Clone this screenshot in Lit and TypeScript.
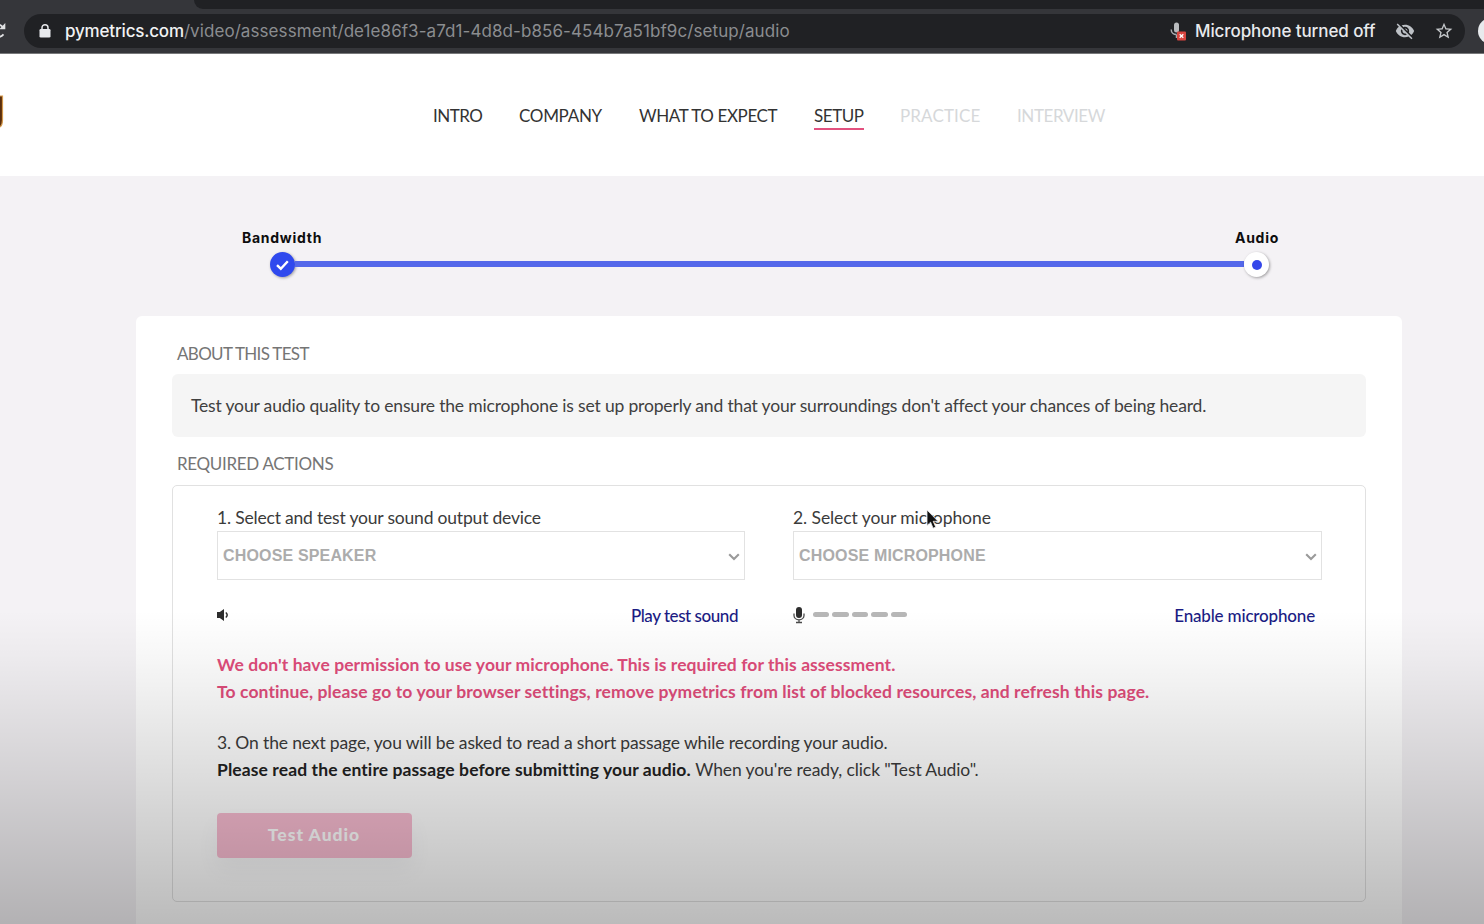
import { LitElement, html, css } from "lit";
import { customElement, property } from "lit/decorators.js";

@customElement("browser-bar")
class BrowserBar extends LitElement {
  static styles = css`
    :host { display: block; height: 54px; background: #35363a; font-family: Inter, sans-serif; overflow: hidden; box-sizing: border-box; border-bottom: 1px solid #77787a; }
    .tabs { height: 9px; margin-left: 194px; background: #202124; border-bottom-left-radius: 9px; }
    .row { display: flex; align-items: center; height: 34px; margin-top: 5px; }
    .reload { width: 24px; height: 34px; flex: none; }
    .pill { width: 1441px; height: 34px; flex: none; border-radius: 17px; background: #202124; display: flex; align-items: center; box-sizing: border-box; padding-left: 15px; }
    .lock { width: 12px; height: 16px; margin-right: 14px; flex: none; }
    .url { font-size: 17px; letter-spacing: 0.08px; color: #8b8d90; white-space: nowrap; width: 1104px; flex: none; }
    .url b { font-weight: 500; color: #f1f2f3; letter-spacing: -0.18px; }
    .mic { width: 18px; height: 20px; flex: none; }
    .off { width: 180px; flex: none; margin-left: 8px; font-size: 17px; font-weight: 500; letter-spacing: -0.1px; color: #e8eaed; white-space: nowrap; }
    .eye { width: 20px; height: 20px; margin-left: 20px; flex: none; }
    .star { width: 20px; height: 20px; margin-left: 19px; flex: none; }
    .avatar { width: 26px; height: 26px; flex: none; margin-left: 13px; border-radius: 50%; background: #e8eaed; }
  `;
  render() {
    return html`
      <div class="tabs"></div>
      <div class="row">
        <svg class="reload" viewBox="0 0 24 34">
          <path d="M-8 17a6.5 6.5 0 0 0 11.5 3.4M-2 10.5c2 0 3.400 1 5 2.800" fill="none" stroke="#e0e1e3" stroke-width="1.800"/>
          <path d="M5.300 9v6.300h-6z" fill="#e0e1e3"/>
        </svg>
        <div class="pill">
          <svg class="lock" viewBox="0 0 12 16">
            <rect x="0.500" y="6" width="11" height="8.500" rx="1.300" fill="#e8eaed"/>
            <path d="M3 6.500V4.700a3 3 0 0 1 6 0V6.500" fill="none" stroke="#e8eaed" stroke-width="1.500"/>
          </svg>
          <span class="url"><b>pymetrics.com</b>/video/assessment/de1e86f3-a7d1-4d8d-b856-454b7a51bf9c/setup/audio</span>
          <svg class="mic" viewBox="0 0 18 20">
            <rect x="5" y="1.500" width="5" height="10" rx="2.500" fill="#b9bbbe"/>
            <path d="M2.200 8.500c0 3 2.300 5.100 5.300 5.100M7.500 13.500V17" fill="none" stroke="#a9abae" stroke-width="1.500"/>
            <rect x="8" y="10.500" width="9" height="9" rx="1" fill="#d8453f"/>
            <path d="M10.700 13.200l3.600 3.600M14.300 13.200l-3.600 3.600" stroke="#fff" stroke-width="1.300"/>
          </svg>
          <span class="off">Microphone turned off</span>
          <svg class="eye" viewBox="0 0 24 24">
            <path fill="#bdc1c6" d="M12 7c2.760 0 5 2.240 5 5 0 .65-.13 1.260-.36 1.830l2.920 2.920c1.510-1.260 2.700-2.890 3.430-4.750-1.730-4.390-6-7.500-11-7.500-1.400 0-2.740.25-3.980.7l2.160 2.160C10.740 7.130 11.350 7 12 7zM2 4.270l2.280 2.280.46.46C3.080 8.300 1.780 10.020 1 12c1.730 4.390 6 7.500 11 7.500 1.550 0 3.030-.3 4.380-.84l.42.42L19.730 22 21 20.730 3.270 3 2 4.270zM7.530 9.800l1.550 1.550c-.05.21-.08.43-.08.65 0 1.660 1.340 3 3 3 .22 0 .44-.03.65-.08l1.550 1.550c-.67.33-1.410.53-2.200.53-2.760 0-5-2.240-5-5 0-.79.2-1.530.53-2.200zm4.310-.78l3.150 3.150.02-.16c0-1.660-1.340-3-3-3l-.17.01z"/>
          </svg>
          <svg class="star" viewBox="0 0 24 24">
            <path fill="#c4c7ca" d="M22 9.240l-7.190-.62L12 2 9.190 8.630 2 9.240l5.460 4.730L5.820 21 12 17.270 18.180 21l-1.630-7.030L22 9.240zM12 15.400l-3.760 2.270 1-4.280-3.320-2.880 4.380-.38L12 6.100l1.710 4.040 4.380.38-3.320 2.880 1 4.280L12 15.400z"/>
          </svg>
        </div>
        <div class="avatar"></div>
      </div>`;
  }
}

@customElement("device-picker")
class DevicePicker extends LitElement {
  @property() label = "";
  @property() choice = "";
  @property() action = "";
  static styles = css`
    :host { display: block; }
    .label { height: 26px; line-height: 26px; font-size: 17.500px; color: #3b3b3b; white-space: nowrap; letter-spacing: var(--label-spacing, 0); }
    .select { height: 49px; box-sizing: border-box; border: 1px solid #e2e2e2; display: flex; align-items: center; justify-content: space-between; padding: 0 4px 0 5px; font: bold 16px/20px "Liberation Sans", Arial, sans-serif; letter-spacing: 0.16px; color: #acacac; background: #fff; }
    .select svg { width: 12px; height: 8px; margin-top: 2px; }
    .foot { display: flex; align-items: center; justify-content: space-between; height: 24px; margin-top: 23px; padding-right: 7px; }
    .action { font-size: 17px; color: #1b1c84; font-weight: 500; white-space: nowrap; letter-spacing: var(--action-spacing, 0); }
  `;
  render() {
    return html`
      <div class="label">${this.label}</div>
      <div class="select">${this.choice}
        <svg viewBox="0 0 12 8"><path d="M1.200 1.300L6 6.100l4.800-4.800" fill="none" stroke="#9a9a9a" stroke-width="2.100"/></svg>
      </div>
      <div class="foot"><slot></slot><span class="action">${this.action}</span></div>`;
  }
}

@customElement("app-root")
class AppRoot extends LitElement {
  static styles = css`
    :host { display: block; position: relative; height: 924px; overflow: hidden; background: #f4f2f5; font-family: Lato, sans-serif; color: #333; }
    .header { height: 122px; background: #fff; display: flex; align-items: flex-start; }
    .logo { width: 4px; height: 34px; margin-top: 41px; }
    nav { display: flex; margin-left: 429px; margin-top: 50px; font-size: 17px; }
    nav span { height: 24px; line-height: 24px; white-space: nowrap; border-bottom: 2.500px solid transparent; }
    .intro { width: 50px; margin-right: 36px; letter-spacing: -0.500px; }
    .company { width: 83px; margin-right: 37px; letter-spacing: -0.300px; }
    .expect { width: 139px; margin-right: 36px; letter-spacing: -0.400px; }
    nav .setup { width: 50px; margin-right: 36px; border-bottom-color: #e2517f; letter-spacing: -0.450px; }
    .practice { width: 81px; margin-right: 36px; color: #d6d8da; letter-spacing: 0.120px; }
    .interview { color: #d6d8da; letter-spacing: -0.420px; }
    .progress { padding: 53px 205px 0 242px; }
    .names { display: flex; justify-content: space-between; height: 18px; font: 700 14px/18px Inter, sans-serif; color: #0d0d0d; letter-spacing: 0.730px; }
    .track { display: flex; align-items: center; height: 26px; margin: 4.500px 10px 0 27.500px; }
    .done, .current { width: 25px; height: 25px; flex: none; border-radius: 50%; background: #2f49ee; box-shadow: 1px 1px 3px rgba(0,0,0,.35); }
    .current { background: #fff; display: grid; place-items: center; }
    .current i { width: 10px; height: 10px; border-radius: 50%; background: #3547ea; }
    .line { height: 6px; flex: 1; background: #5468ea; margin-top: -1px; }
    .card { margin: 38.500px 82px 0 136px; height: 640px; box-sizing: border-box; padding: 26px 36px; background: #fff; border-radius: 6px; }
    h2 { margin: 0 0 0 5px; height: 24px; line-height: 24px; font-size: 17px; font-weight: 400; color: #757575; white-space: nowrap; }
    .about-h { letter-spacing: -0.680px; }
    .req-h { letter-spacing: -0.320px; }
    .about { margin: 8px 0 15px; height: 63px; line-height: 64px; box-sizing: border-box; padding-left: 19px; background: #f5f5f5; border-radius: 6px; font-size: 17.500px; color: #404040; letter-spacing: -0.165px; white-space: nowrap; }
    .actions { margin-top: 9px; height: 417px; box-sizing: border-box; border: 1px solid #e1e1e1; border-radius: 5px; padding: 19px 43px 0 44px; }
    .devices { display: grid; grid-template-columns: 528px 529px; gap: 48px; }
    .out { --label-spacing: -0.190px; --action-spacing: -0.450px; }
    .in { --label-spacing: -0.080px; --action-spacing: -0.170px; }
    .meter { display: flex; align-items: center; gap: 2.700px; margin-top: -1px; }
    .meter svg { width: 12px; height: 18px; margin-right: 5px; }
    .meter i { width: 16.800px; height: 5px; border-radius: 3px; background: #b7b7b7; }
    .speaker { width: 12px; height: 14px; }
    .warn { margin-top: 24px; font-size: 17.500px; line-height: 27px; font-weight: 700; color: #e04d7b; white-space: nowrap; }
    .w1 { letter-spacing: 0.075px; }
    .w2 { letter-spacing: 0.105px; }
    .next { margin-top: 24px; font-size: 17.500px; line-height: 27px; color: #3b3b3b; white-space: nowrap; }
    .n1 { letter-spacing: -0.140px; }
    .next b { color: #222; letter-spacing: 0.100px; }
    .n3 { letter-spacing: -0.100px; }
    .button { display: block; margin-top: 30px; width: 195px; height: 45px; border: 0; padding: 0 1px 2px 0; border-radius: 4px; background: #f7bbd0; color: #fff; font: 900 17.500px Lato, sans-serif; letter-spacing: 1px; box-shadow: 0 12px 22px rgba(80,80,110,.06); }
    .shade { position: absolute; inset: 610px 0 0 0; background: linear-gradient(rgba(0,0,0,0), rgba(0,0,0,.03) 15%, rgba(0,0,0,.137) 54%, rgba(0,0,0,.265)); pointer-events: none; }
    .cursor { position: absolute; left: 926px; top: 509px; width: 13px; height: 21px; }
  `;
  render() {
    return html`
      <browser-bar></browser-bar>
      <div class="header">
        <svg class="logo" viewBox="0 0 4 34"><path d="M0 1h2.500v24q0 5-2.500 7" fill="#5a2d0c" stroke="#d59a4c" stroke-width="1.200"/></svg>
        <nav>
          <span class="intro">INTRO</span><span class="company">COMPANY</span><span class="expect">WHAT TO EXPECT</span><span class="setup">SETUP</span><span class="practice">PRACTICE</span><span class="interview">INTERVIEW</span>
        </nav>
      </div>
      <div class="progress">
        <div class="names"><span>Bandwidth</span><span>Audio</span></div>
        <div class="track">
          <svg class="done" viewBox="0 0 25 25"><path d="M7 13.200l3.800 3.500 7-7.500" fill="none" stroke="#fff" stroke-width="2.400"/></svg>
          <div class="line"></div>
          <div class="current"><i></i></div>
        </div>
      </div>
      <div class="card">
        <h2 class="about-h">ABOUT THIS TEST</h2>
        <div class="about">Test your audio quality to ensure the microphone is set up properly and that your surroundings don't affect your chances of being heard.</div>
        <h2 class="req-h">REQUIRED ACTIONS</h2>
        <div class="actions">
          <div class="devices">
            <device-picker class="out" label="1. Select and test your sound output device" choice="CHOOSE SPEAKER" action="Play test sound">
              <svg class="speaker" viewBox="0 0 12 14"><path d="M0 4h2.800L7 1v12L2.800 10H0z" fill="#2d2d2d"/><path d="M8.800 4.500q2.800 2.500 0 5" fill="none" stroke="#2d2d2d" stroke-width="1.500"/></svg>
            </device-picker>
            <device-picker class="in" label="2. Select your microphone" choice="CHOOSE MICROPHONE" action="Enable microphone">
              <div class="meter">
                <svg viewBox="0 0 12 18"><rect x="3" y="1" width="6" height="11" rx="3" fill="#2d2d2d"/><path d="M1 7.500v2a5 4.300 0 0 0 10 0v-2M6 14v2.500M3 16.500h6" fill="none" stroke="#4a4a4a" stroke-width="1.300"/></svg>
                ${[0, 1, 2, 3, 4].map(() => html`<i></i>`)}
              </div>
            </device-picker>
          </div>
          <div class="warn"><div class="w1">We don't have permission to use your microphone. This is required for this assessment.</div><div class="w2">To continue, please go to your browser settings, remove pymetrics from list of blocked resources, and refresh this page.</div></div>
          <div class="next"><div class="n1">3. On the next page, you will be asked to read a short passage while recording your audio.</div><div class="n2"><b>Please read the entire passage before submitting your audio.</b> <span class="n3">When you're ready, click "Test Audio".</span></div></div>
          <button class="button">Test Audio</button>
        </div>
      </div>
      <div class="shade"></div>
      <svg class="cursor" viewBox="0 0 13 21"><path d="M1 1v15.500l3.600-3.300 2.500 6 2.600-1.100-2.500-5.800H12z" fill="#111" stroke="#eee" stroke-width=".8"/></svg>
    `;
  }
}
